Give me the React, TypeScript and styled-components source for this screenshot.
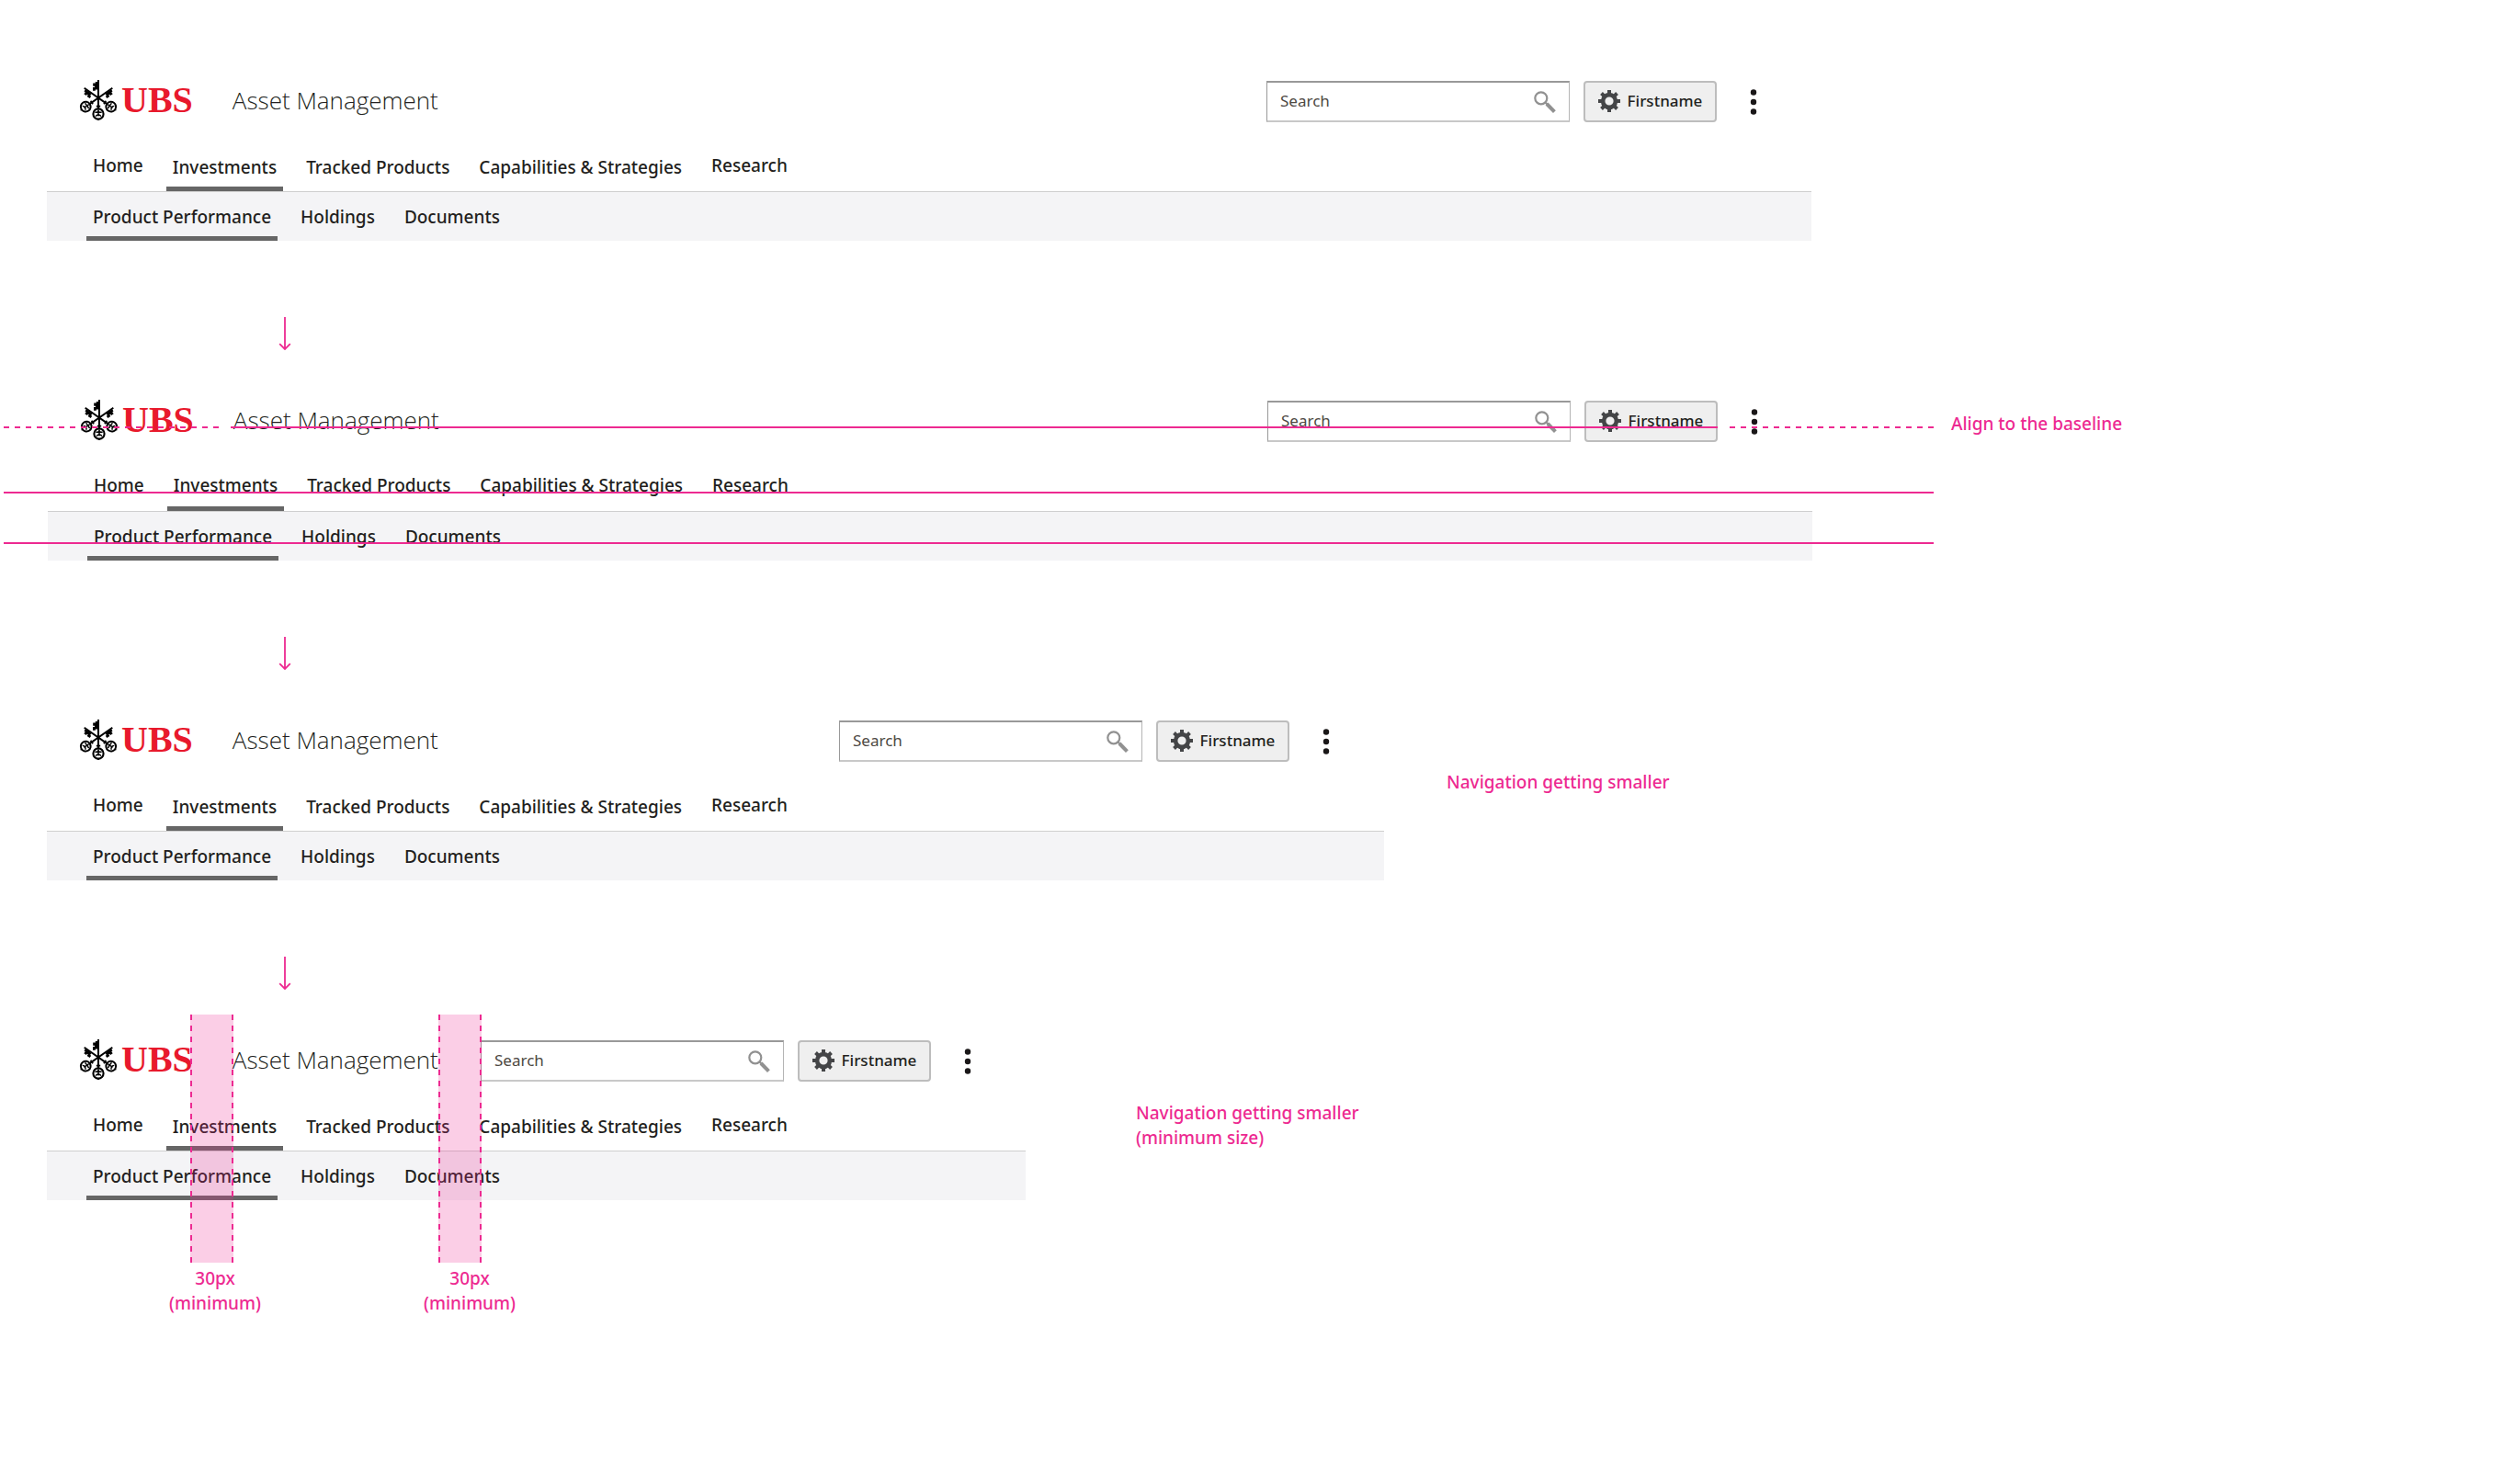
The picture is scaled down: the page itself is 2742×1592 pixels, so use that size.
import React, { useId } from "react";
import styled, { createGlobalStyle, css } from "styled-components";

const PINK = "#ed2a91";
const INK = "#231f20";

const GlobalStyle = createGlobalStyle`
  *, *::before, *::after { box-sizing: border-box; }
  body {
    margin: 0;
    background: #fff;
    color: ${INK};
    font-family: "Noto Sans", "Open Sans", sans-serif;
    font-size: 19px;
    font-weight: 500;
    line-height: 24px;
  }
`;

const Page = styled.main`
  min-height: 100vh;
  padding: 88px 0 120px;
`;

const Step = styled.section<{ $inset: number; $header: number; $aside: number }>`
  display: grid;
  grid-template-columns: minmax(1065px, ${(p) => p.$header}fr) minmax(0, ${(p) => p.$aside}fr);
  align-items: start;
  padding-left: ${(p) => p.$inset}px;
`;

const Header = styled.header`
  position: relative;
`;

const Note = styled.p`
  margin: 0;
  color: ${PINK};
  line-height: 27px;
`;

const SideNote = styled(Note)<{ $top: number; $gap: number }>`
  padding: ${(p) => p.$top}px 0 0 ${(p) => p.$gap}px;
`;

const TopRow = styled.div`
  display: flex;
  align-items: center;
  height: 45px;
  padding: 0 51px 0 35px;
`;

const Brand = styled.a`
  display: flex;
  align-items: center;
  gap: 4px;
  padding-bottom: 3px;
  color: #e8192c;
  text-decoration: none;
`;

const Wordmark = styled.span`
  font: bold 40px/44px "Liberation Serif", serif;
`;

const Title = styled.h1`
  margin: 0 auto 0 43px;
  padding-bottom: 4px;
  font: 300 26px/44px "Open Sans", "Noto Sans", sans-serif;
  white-space: nowrap;
`;

const SearchForm = styled.form`
  display: flex;
  align-items: center;
  width: 330px;
  height: 45px;
  margin-right: 15px;
  padding: 0 14px;
  border: 1px solid #b5b5b5;
  border-top: 2px solid #999;
  border-left-color: #999;
  border-bottom: 2px solid #c8c8c8;
  background: #fff;
`;

const SearchInput = styled.input`
  flex: 1;
  min-width: 0;
  padding: 0 0 2px;
  border: 0;
  outline: 0;
  background: none;
  font: 400 17px/24px "Noto Sans", "Open Sans", sans-serif;
  color: #4d4943;

  &::placeholder {
    color: #4d4943;
    opacity: 1;
  }
`;

const IconButton = styled.button`
  display: flex;
  padding: 0;
  border: 0;
  background: none;
  cursor: pointer;
`;

const DotsButton = styled(IconButton)`
  width: 24px;
  justify-content: center;
  margin-left: 28px;
`;

const ProfileButton = styled.button`
  display: flex;
  align-items: center;
  justify-content: center;
  gap: 8px;
  width: 145px;
  height: 45px;
  padding: 0 0 1px;
  border: 2px solid #bdbdbd;
  border-radius: 4px;
  background: #efefef;
  color: ${INK};
  font: 500 17px/24px "Noto Sans", "Open Sans", sans-serif;
  cursor: pointer;
`;

const NavRow = styled.nav`
  display: flex;
  align-items: flex-end;
  gap: 18px;
  height: 75px;
  padding-left: 43px;
`;

const SubNavRow = styled(NavRow)`
  height: 54px;
  border-top: 1px solid #cfcfcf;
  background: #f4f4f6;
`;

const NavLink = styled.a<{ $active?: boolean; $raised?: boolean }>`
  padding: 0 7px ${(p) => (p.$raised ? 11 : 9)}px;
  border-bottom: 5px solid ${(p) => (p.$active ? "#666" : "transparent")};
  color: ${INK};
  text-decoration: none;
  white-space: nowrap;
`;

const ArrowRow = styled.div`
  display: flex;
  padding: 83px 0 55px 303px;
`;

const Guides = styled.div`
  position: absolute;
  inset: 28px -132px auto -48px;
`;

const GuideLine = styled.div<{ $gap: number }>`
  display: flex;
  gap: 13px;
  margin-bottom: ${(p) => p.$gap}px;
`;

const Solid = styled.span`
  flex: 1;
  height: 2px;
  background: ${PINK};
`;

const Dashed = styled.span<{ $width: number }>`
  width: ${(p) => p.$width}px;
  height: 2px;
  background: repeating-linear-gradient(90deg, ${PINK} 0 6px, transparent 6px 12px);
`;

const dashes = css`
  repeating-linear-gradient(${PINK} 0 6px, transparent 6px 12px)
`;

const Gutter = styled.div<{ $left: number }>`
  position: absolute;
  top: -28px;
  left: ${(p) => p.$left}px;
  width: 47px;
  height: 270px;
  background: ${dashes} left / 2px 100% no-repeat,
    ${dashes} right / 2px 100% no-repeat,
    rgba(237, 42, 145, 0.23);
`;

const GutterLabel = styled(Note)<{ $left: number }>`
  position: absolute;
  top: 246px;
  left: ${(p) => p.$left}px;
  width: 120px;
  text-align: center;
`;

function KeysIcon() {
  const id = useId();
  return (
    <svg width="42" height="44" viewBox="0 0 42 44" aria-hidden="true">
      <defs>
        <g id={id}>
          <path d="M21 0V31.5" stroke="#000" strokeWidth="2" />
          <path
            d="M20.4 2h-2.6v1.6h-2.6v3.2h1.8v1.2h-2v3.8h2.8v-1.4h2.6z"
            fill="#000"
          />
          <path d="M18.8 28.6h4.4" stroke="#000" strokeWidth="1.8" />
          <circle cx="21" cy="37" r="5.6" fill="none" stroke="#000" strokeWidth="2.1" />
          <path
            d="M17.4 35q2.8 1.2 3.6-1.6q.8 2.8 3.6 1.6M21 34v4M18.2 39.6q1.6-2.2 2.8-1q1.2-1.2 2.8 1"
            fill="none"
            stroke="#000"
            strokeWidth="1.5"
          />
          <path d="M19.2 42.4h3.6L21 44.4z" fill="#000" />
        </g>
      </defs>
      <use href={`#${id}`} />
      <use href={`#${id}`} transform="translate(21 19.5) rotate(-55) scale(.96) translate(-21 -19.5)" />
      <use href={`#${id}`} transform="translate(21 19.5) scale(-1 1) rotate(-55) scale(.96) translate(-21 -19.5)" />
    </svg>
  );
}

const SearchIcon = () => (
  <svg width="24" height="24" viewBox="0 0 24 24" fill="none" stroke="#919191" aria-hidden="true">
    <circle cx="7.8" cy="7.8" r="6.5" strokeWidth="2.2" />
    <path d="M12.4 12.4l2.4 2.4" strokeWidth="2.2" />
    <path d="M14 14l8.4 8.6" strokeWidth="4" />
  </svg>
);

const GearIcon = () => (
  <svg width="24" height="24" viewBox="0 0 24 24" fill="none" stroke="#444547" aria-hidden="true">
    <circle cx="12" cy="12" r="6.9" strokeWidth="4.6" />
    {[0, 45, 90, 135].map((angle) => (
      <path
        key={angle}
        d="M12 0v4M12 20v4"
        strokeWidth="4"
        transform={`rotate(${angle} 12 12)`}
      />
    ))}
  </svg>
);

const DotsIcon = () => (
  <svg width="8" height="28" viewBox="0 0 8 28" fill="#1a1718" aria-hidden="true">
    <circle cx="4" cy="3.5" r="3.2" />
    <circle cx="4" cy="14" r="3.2" />
    <circle cx="4" cy="24.5" r="3.2" />
  </svg>
);

const DownArrow = () => (
  <ArrowRow>
    <svg width="14" height="36" viewBox="0 0 14 36" fill="none" stroke={PINK} strokeWidth="1.8" aria-hidden="true">
      <path d="M7 0v35M1.2 29.2l5.8 5.8 5.8-5.8" />
    </svg>
  </ArrowRow>
);

const NAV = [
  { label: "Home", raised: true },
  { label: "Investments", active: true },
  { label: "Tracked Products" },
  { label: "Capabilities & Strategies" },
  { label: "Research", raised: true },
];

const SUB_NAV = [
  { label: "Product Performance", active: true },
  { label: "Holdings" },
  { label: "Documents" },
];

interface NavigationProps {
  aligned?: boolean;
  children?: React.ReactNode;
}

function Navigation({ aligned = false, children }: NavigationProps) {
  return (
    <Header>
      <TopRow>
        <Brand href="#">
          <KeysIcon />
          <Wordmark>UBS</Wordmark>
        </Brand>
        <Title>Asset Management</Title>
        <SearchForm role="search">
          <SearchInput placeholder="Search" aria-label="Search" />
          <IconButton type="button" aria-label="Submit search">
            <SearchIcon />
          </IconButton>
        </SearchForm>
        <ProfileButton type="button">
          <GearIcon />
          Firstname
        </ProfileButton>
        <DotsButton type="button" aria-label="More options">
          <DotsIcon />
        </DotsButton>
      </TopRow>
      <NavRow aria-label="Main">
        {NAV.map((item) => (
          <NavLink key={item.label} href="#" $active={item.active} $raised={aligned || item.raised}>
            {item.label}
          </NavLink>
        ))}
      </NavRow>
      <SubNavRow aria-label="Section">
        {SUB_NAV.map((item) => (
          <NavLink key={item.label} href="#" $active={item.active}>
            {item.label}
          </NavLink>
        ))}
      </SubNavRow>
      {children}
    </Header>
  );
}

export default function App() {
  return (
    <>
      <GlobalStyle />
      <Page>
        <Step $inset={51} $header={1920} $aside={771}>
          <Navigation />
        </Step>
        <DownArrow />
        <Step $inset={52} $header={1920} $aside={770}>
          <Navigation aligned>
            <Guides>
              <GuideLine $gap={69}>
                <Dashed $width={234} />
                <Solid />
                <Dashed $width={222} />
              </GuideLine>
              <GuideLine $gap={53}>
                <Solid />
              </GuideLine>
              <GuideLine $gap={0}>
                <Solid />
              </GuideLine>
            </Guides>
          </Navigation>
          <SideNote $top={12} $gap={151}>
            Align to the baseline
          </SideNote>
        </Step>
        <DownArrow />
        <Step $inset={51} $header={1455} $aside={1236}>
          <Navigation />
          <SideNote $top={54} $gap={68}>
            Navigation getting smaller
          </SideNote>
        </Step>
        <DownArrow />
        <Step $inset={51} $header={1065} $aside={1626}>
          <Navigation>
            <Gutter $left={156} />
            <Gutter $left={426} />
            <GutterLabel $left={123}>
              30px
              <br />
              (minimum)
            </GutterLabel>
            <GutterLabel $left={400}>
              30px
              <br />
              (minimum)
            </GutterLabel>
          </Navigation>
          <SideNote $top={66} $gap={120}>
            Navigation getting smaller
            <br />
            (minimum size)
          </SideNote>
        </Step>
      </Page>
    </>
  );
}
